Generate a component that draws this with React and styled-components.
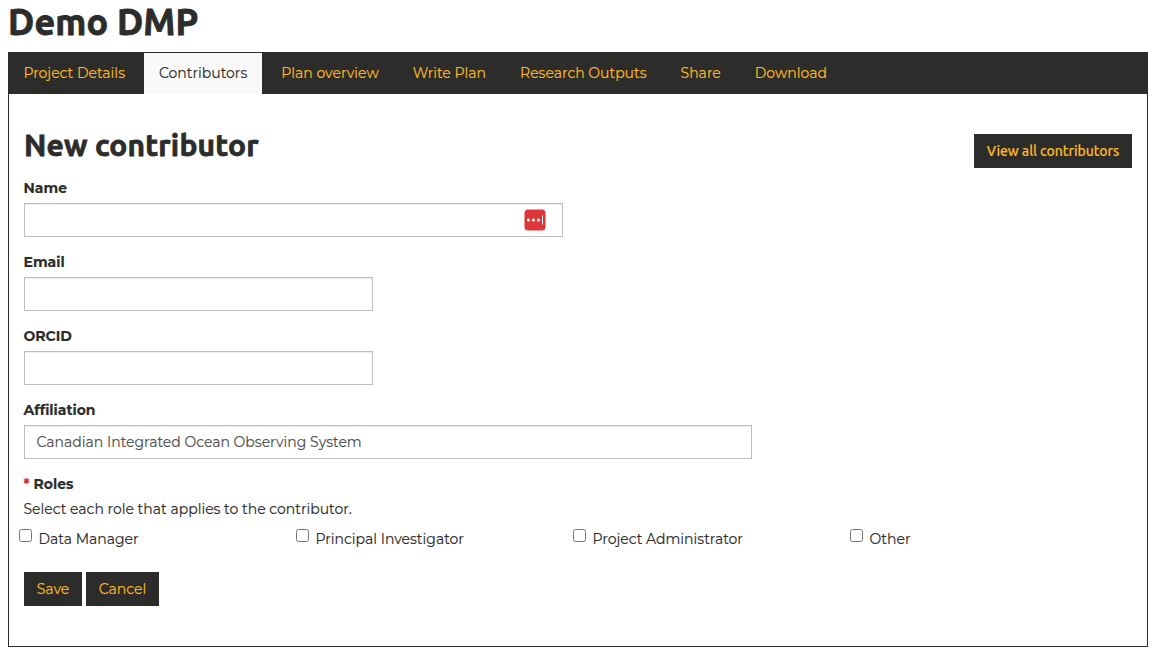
import React from 'react';
import styled, { createGlobalStyle } from 'styled-components';

const INK = '#2c2d2b';
const GOLD = '#fcb826';
const BODY = '"Montserrat", "Inter", "Liberation Sans", sans-serif';
const HEAD = '"Ubuntu", "Noto Sans", "Liberation Sans", sans-serif';

const GlobalStyle = createGlobalStyle`
  *, *::before, *::after { box-sizing: border-box; }
  body {
    margin: 0;
    background: #fff;
    color: ${INK};
    font: 14px/20px ${BODY};
    -webkit-text-stroke: 0.15px;
  }
  input, button { font: inherit; }
`;

const Page = styled.main`
  padding: 2px 8px 0;
`;

const Title = styled.h1`
  margin: 0 0 10px;
  font: 700 36px/40px ${HEAD};
  letter-spacing: 0.15px;
  -webkit-text-stroke: 0.9px;
`;

const Tabs = styled.nav`
  display: flex;
  height: 42px;
  padding: 1px 1px 0 0.4px;
  background: ${INK};
`;

const Tab = styled.a`
  margin-right: 4px;
  padding: 10px 15px 11px;
  white-space: nowrap;
  text-decoration: none;
  color: ${(p) => (p.$active ? INK : GOLD)};
  background: ${(p) => (p.$active ? '#f9f9f9' : 'transparent')};
`;

const Panel = styled.section`
  height: 553px;
  padding: 35px 15px 0;
  border: 1px solid ${INK};
  border-top: 0;
`;

const PanelHeader = styled.header`
  display: flex;
  justify-content: space-between;
  align-items: flex-start;
  height: 49px;
`;

const Heading = styled.h2`
  margin: 0;
  font: 700 30px/33px ${HEAD};
  letter-spacing: 0.18px;
  -webkit-text-stroke: 0.8px;
`;

const Button = styled.button`
  height: 34px;
  padding: 0 12.7px;
  border: 0;
  background: ${INK};
  color: ${GOLD};
  white-space: nowrap;
`;

const HeaderButton = styled(Button)`
  width: 158px;
  margin-top: 5px;
  padding: 0;
  font: 500 14px/20px ${HEAD};
  letter-spacing: -0.06px;
`;

const Field = styled.div`
  margin-bottom: 15px;
`;

const Label = styled.label`
  display: block;
  margin: 0 0 5px -0.5px;
  font-weight: 700;
`;

const InputBox = styled.div`
  display: flex;
  align-items: center;
  width: ${(p) => p.$width}px;
  height: 34px;
  padding: 0 16px 0 11.5px;
  border: 1px solid #bfbfbf;
  box-shadow: inset 0 1px 1px rgba(0, 0, 0, 0.075);
`;

const Input = styled.input`
  flex: 1;
  min-width: 0;
  padding: 0;
  border: 0;
  outline: 0;
  background: transparent;
  color: #505050;
`;

const Required = styled.span`
  color: #c9302c;
  margin-right: 4px;
`;

const Hint = styled.p`
  margin: 0 0 10px -0.5px;
`;

const Roles = styled.div`
  display: grid;
  grid-template-columns: repeat(4, 277px);
  margin: 0 -15px 23px -5px;
`;

const Role = styled.label`
  display: flex;
  align-items: flex-start;
  gap: 6.5px;
`;

const Checkbox = styled.input.attrs({ type: 'checkbox' })`
  width: 13px;
  height: 13px;
  margin: 0;
`;

const Actions = styled.div`
  display: flex;
  gap: 4px;
`;

const tabs = [
  'Project Details',
  'Contributors',
  'Plan overview',
  'Write Plan',
  'Research Outputs',
  'Share',
  'Download',
];

const roles = ['Data Manager', 'Principal Investigator', 'Project Administrator', 'Other'];

const PasswordIcon = () => (
  <svg width="22" height="22" viewBox="0 0 22 22" aria-hidden="true">
    <rect x="0.5" y="0.5" width="21" height="21" rx="3.5" fill="#dc3638" />
    <circle cx="4.4" cy="11" r="1.5" fill="#fff" />
    <circle cx="9.4" cy="11" r="1.5" fill="#fff" />
    <circle cx="14.4" cy="11" r="1.5" fill="#fff" />
    <rect x="18" y="6.5" width="1" height="9" fill="#fff" />
  </svg>
);

export default function App() {
  return (
    <Page>
      <GlobalStyle />
      <Title>Demo DMP</Title>
      <Tabs>
        {tabs.map((text) => (
          <Tab key={text} $active={text === 'Contributors'}>{text}</Tab>
        ))}
      </Tabs>
      <Panel>
        <PanelHeader>
          <Heading>New contributor</Heading>
          <HeaderButton>View all contributors</HeaderButton>
        </PanelHeader>
        <Field>
          <Label htmlFor="name">Name</Label>
          <InputBox $width={539}>
            <Input id="name" />
            <PasswordIcon />
          </InputBox>
        </Field>
        <Field>
          <Label htmlFor="email">Email</Label>
          <InputBox $width={349}><Input id="email" /></InputBox>
        </Field>
        <Field>
          <Label htmlFor="orcid">ORCID</Label>
          <InputBox $width={349}><Input id="orcid" /></InputBox>
        </Field>
        <Field>
          <Label htmlFor="affiliation">Affiliation</Label>
          <InputBox $width={728}>
            <Input id="affiliation" defaultValue="Canadian Integrated Ocean Observing System" />
          </InputBox>
        </Field>
        <Label as="div"><Required>*</Required>Roles</Label>
        <Hint>Select each role that applies to the contributor.</Hint>
        <Roles>
          {roles.map((text) => (
            <Role key={text}><Checkbox />{text}</Role>
          ))}
        </Roles>
        <Actions>
          <Button>Save</Button>
          <Button>Cancel</Button>
        </Actions>
      </Panel>
    </Page>
  );
}
